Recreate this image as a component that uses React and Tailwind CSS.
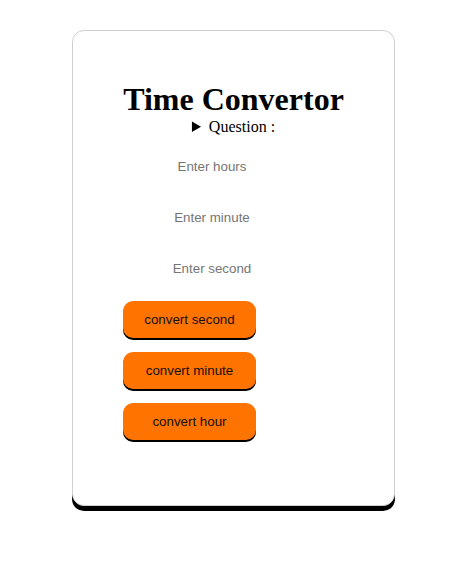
import React, { useState } from "react";

const Field = ({ placeholder, value, onChange }) => (
  <input
    type="text"
    inputMode="numeric"
    value={value}
    onChange={(e) => onChange(e.target.value)}
    placeholder={placeholder}
    className="w-[178px] h-[37px] text-center text-[13.333px] text-black placeholder:text-[#757575] outline-none bg-transparent [font-family:'Liberation_Sans',Arial,sans-serif]"
  />
);

const ConvertButton = ({ children, onClick }) => (
  <button
    onClick={onClick}
    className="w-[133px] h-[37px] rounded-[10px] bg-[#ff7300] pt-[1px] text-[13.333px] text-[#111] shadow-[0_2px_0_#000] [font-family:'Liberation_Sans',Arial,sans-serif]"
  >
    {children}
  </button>
);

export default function App() {
  const [hours, setHours] = useState("");
  const [minutes, setMinutes] = useState("");
  const [seconds, setSeconds] = useState("");

  return (
    <div className="min-h-[563px] bg-white pt-[30px]">
      <div className="ml-[72px] w-[323px] rounded-[12px] border border-[#cfcfcf] bg-white shadow-[0_5px_0_#000] pt-[50px] pb-[65px] pl-[50px] pr-[50px]">
        <h1 className="text-center text-[32px] font-bold leading-[37px] text-black [font-family:'Liberation_Serif','Times_New_Roman',serif]">
          Time Convertor
        </h1>
        <details className="text-center text-[16px] leading-[18px] text-black [font-family:'Liberation_Serif','Times_New_Roman',serif]">
          <summary className="cursor-pointer">Question :</summary>
          <p className="text-sm">Convert between hours, minutes and seconds.</p>
        </details>
        <div className="mt-[12px] flex flex-col gap-[14px]">
          <Field placeholder="Enter hours" value={hours} onChange={setHours} />
          <Field placeholder="Enter minute" value={minutes} onChange={setMinutes} />
          <Field placeholder="Enter second" value={seconds} onChange={setSeconds} />
          <div className="flex flex-col items-start gap-[14px]">
            <ConvertButton onClick={() => setSeconds(String(hours * 3600 + minutes * 60))}>
              convert second
            </ConvertButton>
            <ConvertButton onClick={() => setMinutes(String(hours * 60 + seconds / 60))}>
              convert minute
            </ConvertButton>
            <ConvertButton onClick={() => setHours(String(minutes / 60 + seconds / 3600))}>
              convert hour
            </ConvertButton>
          </div>
        </div>
      </div>
    </div>
  );
}
